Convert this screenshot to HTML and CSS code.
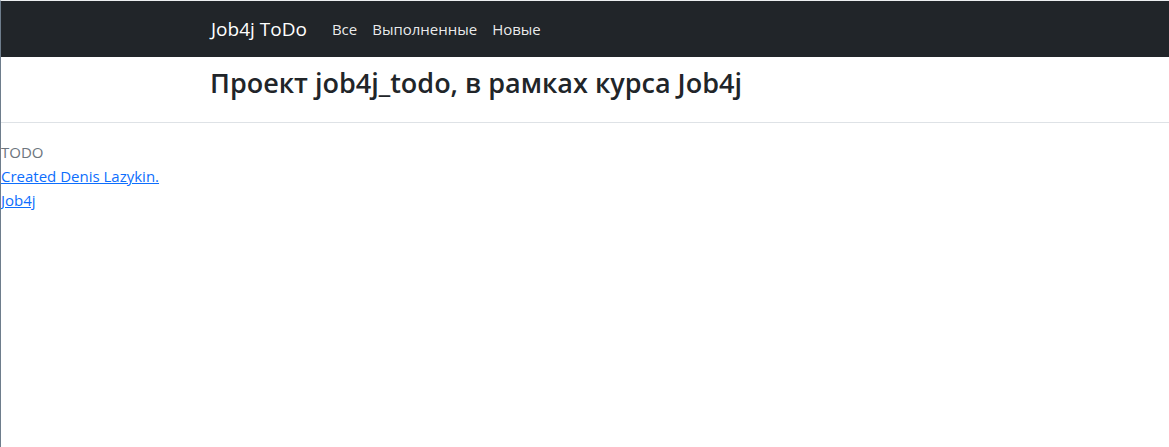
FILE: index.html
```html
<!DOCTYPE html>
<html lang="ru">
<head>
<meta charset="utf-8">
<title>Job4j ToDo</title>
<link rel="stylesheet" href="styles.css">
</head>
<body>
<nav class="navbar">
  <div class="nav-inner">
    <a class="brand" href="#">Job4j ToDo</a>
    <a class="nav-link" href="#">Все</a>
    <a class="nav-link" href="#">Выполненные</a>
    <a class="nav-link" href="#">Новые</a>
  </div>
</nav>
<section class="page-head">
  <h3 class="title">Проект job4j_todo, в рамках курса Job4j</h3>
</section>
<footer class="footer">
  <div class="muted">TODO</div>
  <div><a class="link" href="#">Created Denis Lazykin.</a></div>
  <div><a class="link" href="#">Job4j</a></div>
</footer>
</body>
</html>
```
FILE: styles.css
```css
html, body {
  height: 100%;
}
body {
  margin: 0;
  box-sizing: border-box;
  border-top: 1px solid #eceef0;
  border-left: 1px solid #6e7d8c;
  font-family: "Open Sans", "Noto Sans", sans-serif;
  font-size: 16px;
  line-height: 24px;
  color: #212529;
  background: #fff;
}
.navbar {
  background: #212529;
  height: 56px;
  display: flex;
  align-items: center;
}
.nav-inner {
  display: flex;
  align-items: center;
  padding-left: 210px;
}
.brand {
  color: #fff;
  text-decoration: none;
  font-size: 19px;
  line-height: 30px;
  margin-right: 17px;
}
.nav-link {
  color: rgba(255,255,255,0.92);
  text-decoration: none;
  font-size: 15px;
  padding: 8px;
}
.nav-link + .nav-link {
  margin-left: -1px;
}
.page-head {
  padding: 9px 0 22px 209px;
  border-bottom: 1px solid #dee2e6;
}
.title {
  margin: 0;
  font-size: 27px;
  line-height: 34px;
  font-weight: 600;
}
.footer {
  margin-top: 17px;
  font-size: 15px;
}
.muted {
  color: #6c757d;
}
.link {
  color: #0d6efd;
  text-decoration: underline;
}
```
